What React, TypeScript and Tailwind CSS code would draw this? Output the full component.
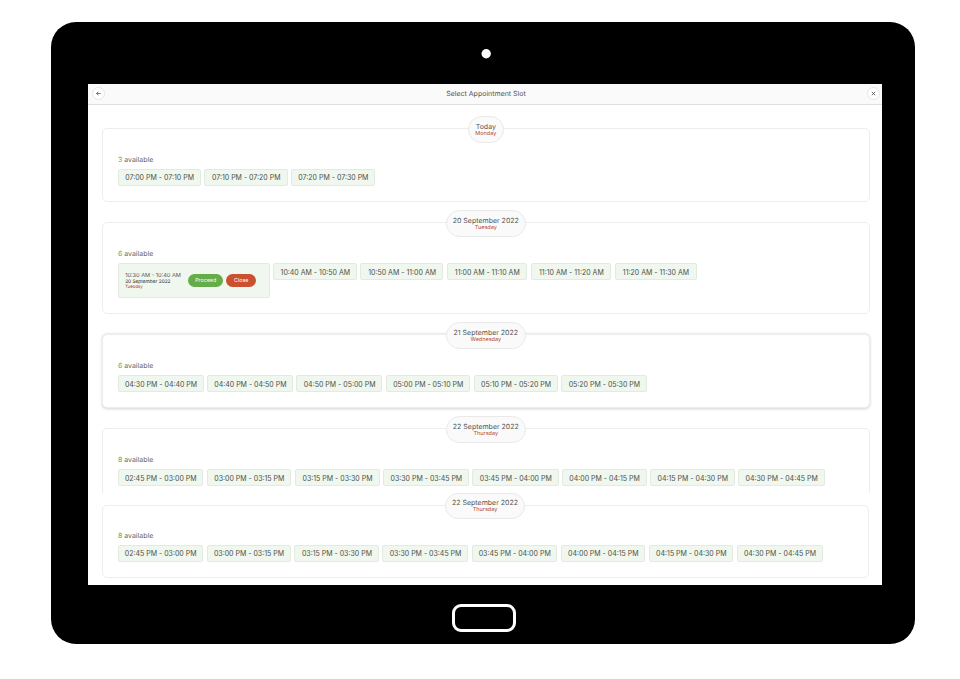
import React from 'react';

type Slot = { label: string; w: number };

const chip =
  'flex shrink-0 h-[17px] items-center justify-center rounded-[2px] border border-[#e3ebe1] bg-[#f0f7ee] pt-[0.5px] pl-[0.5px] whitespace-nowrap text-[7px] leading-none text-[#4c504b]';

function SlotChip({ slot }: { slot: Slot }) {
  return (
    <button className={chip} style={{ width: slot.w }}>
      {slot.label}
    </button>
  );
}

function DayCard({
  title,
  day,
  count,
  slots,
  className,
  pill,
  children,
}: {
  title: string;
  day: string;
  count: number;
  slots: Slot[];
  className: string;
  pill: string;
  children?: React.ReactNode;
}) {
  return (
    <section className={`flex shrink-0 flex-col rounded-[5px] border border-[#ededed] bg-white ${className}`}>
      <div
        className={`-mt-[13px] flex shrink-0 flex-col items-center self-center rounded-full border border-[#e9e9e9] bg-[#fafafa] ${pill}`}
      >
        <span className="whitespace-nowrap text-[7px] leading-[9px] text-[#555]">{title}</span>
        <span className="text-[5.5px] leading-[6px] text-[#b5482f]">{day}</span>
      </div>
      <div className="mt-[12px] ml-[15.4px] text-[7px] leading-[10px] text-[#666]">
        <span className="text-[#62b152]">{count}</span> available
      </div>
      <div className="mt-[4px] ml-[15.2px] flex items-start gap-[3.35px]">
        {children}
        {slots.map((s) => (
          <SlotChip key={s.label} slot={s} />
        ))}
      </div>
    </section>
  );
}

const monday: Slot[] = [
  { label: '07:00 PM - 07:10 PM', w: 83.3 },
  { label: '07:10 PM - 07:20 PM', w: 83.3 },
  { label: '07:20 PM - 07:30 PM', w: 84.3 },
];
const tuesday: Slot[] = [
  { label: '10:40 AM - 10:50 AM', w: 84.1 },
  { label: '10:50 AM - 11:00 AM', w: 82.8 },
  { label: '11:00 AM - 11:10 AM', w: 80.8 },
  { label: '11:10 AM - 11:20 AM', w: 80.7 },
  { label: '11:20 AM - 11:30 AM', w: 81.8 },
];
const wednesday: Slot[] = [
  { label: '04:30 PM - 04:40 PM', w: 86.2 },
  { label: '04:40 PM - 04:50 PM', w: 85.8 },
  { label: '04:50 PM - 05:00 PM', w: 86 },
  { label: '05:00 PM - 05:10 PM', w: 84.6 },
  { label: '05:10 PM - 05:20 PM', w: 84.4 },
  { label: '05:20 PM - 05:30 PM', w: 85.5 },
];
const thursday: Slot[] = [
  { label: '02:45 PM - 03:00 PM', w: 85.7 },
  { label: '03:00 PM - 03:15 PM', w: 84.7 },
  { label: '03:15 PM - 03:30 PM', w: 85 },
  { label: '03:30 PM - 03:45 PM', w: 86 },
  { label: '03:45 PM - 04:00 PM', w: 86.1 },
  { label: '04:00 PM - 04:15 PM', w: 84.9 },
  { label: '04:15 PM - 04:30 PM', w: 84.8 },
  { label: '04:30 PM - 04:45 PM', w: 86.3 },
];
const thursdayNarrow: Slot[] = thursday.map((s) => ({ label: s.label, w: s.w - 0.22 }));

const roundButton =
  'flex h-[13px] w-[13px] items-center justify-center rounded-full border border-[#e6e6e6] bg-white';

export default function App() {
  return (
    <div className="h-[679px] w-[960px] overflow-hidden bg-white pt-[22px] pl-[51px] font-[Inter,'Liberation_Sans',sans-serif] [text-rendering:geometricPrecision]">
      <div className="flex h-[622px] w-[864.4px] flex-col rounded-[25px] bg-black">
        <div className="flex h-[62px] shrink-0 justify-center pt-[27px] pl-[6px]">
          <svg width="10" height="10" viewBox="0 0 10 10">
            <circle cx="5.2" cy="4.8" r="4.7" fill="#fff" />
          </svg>
        </div>

        <main className="ml-[36.5px] flex h-[501px] w-[794.5px] shrink-0 flex-col overflow-hidden bg-white">
          <header className="flex h-[21px] shrink-0 items-center justify-between border-b border-[#dedede] bg-[#fafafa] pr-[1.5px] pb-[2px] pl-[4px]">
            <button className={roundButton}>
              <svg width="5" height="5" viewBox="0 0 10 10" fill="none" stroke="#555" strokeWidth="1.6">
                <path d="M9.2 5H1.2M4.8 1.4L1.2 5l3.6 3.6" />
              </svg>
            </button>
            <h1 className="text-[7px] leading-none text-[#555]">Select Appointment Slot</h1>
            <button className={roundButton}>
              <svg width="5" height="5" viewBox="0 0 10 10" fill="none" stroke="#555" strokeWidth="1.8">
                <path d="M1.6 1.6l6.8 6.8M8.4 1.6L1.6 8.4" />
              </svg>
            </button>
          </header>

          <div className="flex h-[387.5px] shrink-0 flex-col overflow-hidden pt-[23px] pl-[14px]">
            <DayCard title="Today" day="Monday" count={3} slots={monday} className="h-[74px] w-[768.6px]" pill="h-[27px] w-[36px] pt-[5px]" />
            <DayCard
              title="20 September 2022"
              day="Tuesday"
              count={6}
              slots={tuesday}
              className="mt-[20.4px] h-[92px] w-[768.6px]"
              pill="h-[27px] w-[80.4px] pt-[5px]"
            >
              <div className="flex h-[35px] w-[152px] shrink-0 items-center rounded-[2px] border border-[#e3ebe1] bg-[#f0f7ee] pl-[6.5px]">
                <div className="flex w-[63px] flex-col pt-[1px] whitespace-nowrap">
                  <span className="text-[5.6px] leading-[6px] text-[#555]">10:30 AM - 10:40 AM</span>
                  <span className="text-[4.8px] leading-[6px] text-[#222]">20 September 2022</span>
                  <span className="text-[4.4px] leading-[5px] text-[#b5482f]">Tuesday</span>
                </div>
                <button className="flex h-[13px] w-[35px] items-center justify-center rounded-full bg-[#64ad4a] text-[5.3px] leading-none text-white">
                  Proceed
                </button>
                <button className="ml-[3px] flex h-[13px] w-[30px] items-center justify-center rounded-full bg-[#cb4f31] text-[5.3px] leading-none text-white">
                  Close
                </button>
              </div>
            </DayCard>
            <DayCard
              title="21 September 2022"
              day="Wednesday"
              count={6}
              slots={wednesday}
              className="mt-[20px] h-[74px] w-[768.6px] shadow-[0_0.5px_3px_rgba(0,0,0,0.18)]"
              pill="h-[27px] w-[79.6px] pt-[5px]"
            />
            <DayCard
              title="22 September 2022"
              day="Thursday"
              count={8}
              slots={thursday}
              className="mt-[20px] h-[74px] w-[768.6px]"
              pill="h-[27px] w-[80.2px] pt-[5px]"
            />
          </div>

          <div className="flex h-[92.5px] shrink-0 flex-col pt-[12.5px] pl-[14px]">
            <DayCard
              title="22 September 2022"
              day="Thursday"
              count={8}
              slots={thursdayNarrow}
              className="h-[73px] w-[767px]"
              pill="h-[26px] w-[80px] pt-[4px]"
            />
          </div>
        </main>

        <div className="flex flex-1 justify-center pt-[19px] pl-[1px]">
          <div className="h-[28px] w-[64px] rounded-[9px] border-[3px] border-white" />
        </div>
      </div>
    </div>
  );
}
